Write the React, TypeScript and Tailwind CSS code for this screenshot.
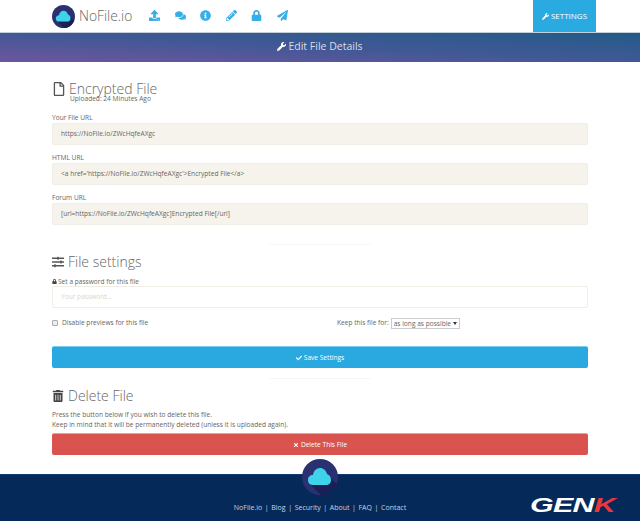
import React from "react";
import { FaUpload, FaComments, FaInfoCircle, FaPencilAlt, FaLock, FaPaperPlane, FaWrench, FaRegFile, FaSlidersH, FaTrashAlt, FaCheck, FaTimes } from "react-icons/fa";

function Logo({ size }: { size: number }) {
  return (
    <svg width={size} height={size} viewBox="0 0 36 36" className="block shrink-0">
      <defs>
        <clipPath id={`c${size}`}><circle cx="18" cy="18" r="18" /></clipPath>
      </defs>
      <circle cx="18" cy="18" r="18" fill="#2a3170" />
      <g clipPath={`url(#c${size})`}>
        <path d="M9 26 L21 38 L45 38 L45 35 L29 19 L24 26 Z" fill="#1a1f55" />
      </g>
      <path d="M11 26 C7 26 6 23 6 21 C6 18 8 16 11 16 C11.5 12 14.5 9 18 9 C21.5 9 24 11.5 25 15 C27.5 16 29 18 29 21 C29 24 27 26 24 26 Z" fill="#3ed3ea" />
    </svg>
  );
}

function UrlField({ label, value }: { label: string; value: string }) {
  return (
    <div className="flex flex-col">
      <label className="text-[6.6px] leading-[9px] text-[#666]">{label}</label>
      <div className="h-[22px] mt-[1px] flex items-center px-2 rounded-[2px] border border-[#f1eee7] bg-[#f6f3ec] text-[6.6px] text-[#666]">{value}</div>
    </div>
  );
}

function Divider({ className }: { className: string }) {
  return <div className={`h-px w-[100px] mx-auto bg-[#f5f5f5] ${className}`} />;
}

const links = ["NoFile.io", "|", "Blog", "|", "Security", "|", "About", "|", "FAQ", "|", "Contact"];

export default function App() {
  const nav = [FaUpload, FaComments, FaInfoCircle, FaPencilAlt, FaLock, FaPaperPlane];
  return (
    <div className="w-[640px] h-[521px] overflow-hidden bg-white flex flex-col text-[#666] font-['Open_Sans',sans-serif]">
      <header className="h-[32px] shrink-0 flex items-start pl-[52px] pr-[44px] bg-white">
        <div className="flex items-center h-[26px] mt-[3px]">
          <Logo size={23} />
          <span className="ml-[4px] text-[13.8px] font-light text-[#666]">NoFile.io</span>
        </div>
        <nav className="ml-[17px] flex items-center h-[30px] gap-[14.5px] text-[#38aee6]">
          {nav.map((I, i) => <I key={i} size={11} />)}
        </nav>
        <div className="ml-auto w-[63px] h-[32px] bg-[#29abe2] text-white flex items-center justify-center gap-[2px] text-[8px]">
          <FaWrench size={7} />
          <span>SETTINGS</span>
        </div>
      </header>

      <div className="h-[30px] shrink-0 border-t border-[#c5cfdc] flex items-center justify-center gap-[2px] pb-[2px] text-[#d8deea] text-[10.5px] bg-gradient-to-tr from-[#6c559f] via-[#415896] to-[#1f5b87]">
        <FaWrench size={9} className="text-white" />
        <span>Edit File Details</span>
      </div>

      <main className="flex-1 px-[52px] flex flex-col">
        <div className="mt-[18px] flex items-center h-[18px]">
          <FaRegFile size={14} className="text-[#555]" />
          <h1 className="ml-[3px] text-[14px] font-light text-[#666] leading-[18px]">Encrypted File</h1>
        </div>
        <p className="text-[6.6px] leading-[9px] -mt-[4px] ml-[18px] text-[#666]">Uploaded: 24 Minutes Ago</p>
        <div className="mt-[10px] flex flex-col gap-[8px]">
          <UrlField label="Your File URL" value="https://NoFile.io/ZWcHqfeAXgc" />
          <UrlField label="HTML URL" value={`<a href='https://NoFile.io/ZWcHqfeAXgc'>Encrypted File</a>`} />
          <UrlField label="Forum URL" value="[url=https://NoFile.io/ZWcHqfeAXgc]Encrypted File[/url]" />
        </div>
        <Divider className="mt-[19px]" />
        <div className="mt-[8px] flex items-center h-[18px] text-[#555]">
          <FaSlidersH size={12} />
          <h2 className="ml-[4px] text-[14px] font-light text-[#666] leading-[18px]">File settings</h2>
        </div>
        <div className="mt-[6px] flex items-center gap-[1px] text-[6.6px] leading-[9px]">
          <FaLock size={5} className="text-[#444]" />
          <span>Set a password for this file</span>
        </div>
        <div className="h-[22px] flex items-center px-2 rounded-[2px] border border-[#f1eee6] bg-white text-[6.6px] text-[#ddd5c8]">Your password...</div>
        <div className="mt-[8px] flex items-center h-[14px] text-[6.6px]">
          <span className="w-[6px] h-[6px] rounded-[1px] border border-[#aaa] bg-[#eee]" />
          <span className="ml-[4px] w-[275px]">Disable previews for this file</span>
          <span>Keep this file for:</span>
          <div className="relative ml-[2px]">
            <select className="block appearance-none h-[11px] w-[69px] pl-[2px] text-[6.6px] leading-[9px] border border-[#ccc] bg-white text-[#666]" defaultValue="a">
              <option value="a">as long as possible</option>
            </select>
            <span className="absolute right-[3px] top-[4px] w-0 h-0 border-x-[2px] border-x-transparent border-t-[3px] border-t-[#333]" />
          </div>
        </div>
        <button className="mt-[16px] h-[22px] rounded-[2px] bg-[#29a9e0] border-t border-[#7ccbec] text-white text-[6.6px] flex items-center justify-center gap-[2px]">
          <FaCheck size={6} />
          <span>Save Settings</span>
        </button>
        <Divider className="mt-[10px]" />
        <div className="mt-[8px] flex items-center h-[18px]">
          <FaTrashAlt size={12} className="text-[#444]" />
          <h2 className="ml-[4px] text-[14px] font-light text-[#666] leading-[18px]">Delete File</h2>
        </div>
        <p className="mt-[5px] text-[6.6px] leading-[10px]">Press the button below if you wish to delete this file.<br />Keep in mind that it will be permanently deleted (unless it is uploaded again).</p>
        <button className="mt-[3px] h-[22px] rounded-[2px] bg-[#d9534f] border-t border-[#eb9e9b] text-white text-[6.6px] flex items-center justify-center gap-[2px]">
          <FaTimes size={6} />
          <span>Delete This File</span>
        </button>
      </main>

      <footer className="relative h-[47px] shrink-0 bg-[#052958] border-t border-[#0f3a6b]">
        <div className="absolute left-[302px] -top-[16px]"><Logo size={36} /></div>
        <div className="absolute left-0 right-0 top-[27px] flex justify-center gap-[2.6px] text-[7px] leading-[12px] text-[#c9d3e0]">
          {links.map((l, i) => <span key={i}>{l}</span>)}
        </div>
        <div className="absolute left-[530px] top-[21px] text-[21px] leading-[18px] font-bold italic tracking-[-0.5px] scale-x-[1.45] origin-left text-white font-['Liberation_Sans',sans-serif]">
          GEN<span className="text-[#e8363c]">K</span>
        </div>
      </footer>
    </div>
  );
}
